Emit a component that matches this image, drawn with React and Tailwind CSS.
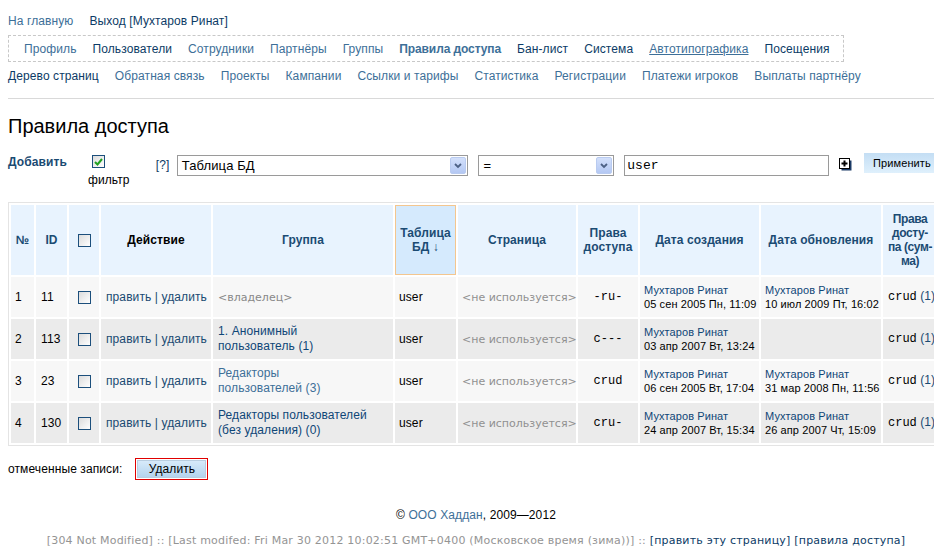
import React from 'react';

const sans = { fontFamily: '"Liberation Sans", Arial, sans-serif' };
const mono = { fontFamily: '"Liberation Mono", "Courier New", monospace' };
const verdana = { fontFamily: '"DejaVu Sans", Verdana, sans-serif' };

const Check = ({ checked }) => (
    <span className="inline-flex w-[13px] h-[13px] border border-[#1c4f7c] bg-gradient-to-br from-[#dcdcdc] to-[#ffffff] items-center justify-center align-middle">
        {checked && (
            <svg width="9" height="8" viewBox="0 0 9 8">
                <path d="M1 4 L3.5 6.5 L8 1" stroke="#21a121" strokeWidth="2" fill="none" />
            </svg>
        )}
    </span>
);

const Arrow = () => (
    <div className="w-[16px] h-[17px] rounded-[2px] bg-gradient-to-b from-[#d3e0fb] to-[#b4c8f3] border border-[#b9cbf0] flex items-center justify-center">
        <svg width="8" height="6" viewBox="0 0 8 6">
            <path d="M1 1 L4 4 L7 1" stroke="#4d6185" strokeWidth="1.8" fill="none" />
        </svg>
    </div>
);

const Author = ({ date }) => (
    <div className="text-[11px] leading-[14px] whitespace-nowrap">
        <div className="text-[#0f4677]">Мухтаров Ринат</div>
        <div className="text-black">{date}</div>
    </div>
);

const rows = [
    { n: 1, id: 11, group: null, rights: '-ru-', created: '05 сен 2005 Пн, 11:09', updated: '10 июл 2009 Пт, 16:02', bg: 'bg-[#f7f7f7]' },
    { n: 2, id: 113, group: ['1. Анонимный', 'пользователь (1)'], rights: 'c---', created: '03 апр 2007 Вт, 13:24', updated: null, bg: 'bg-[#ebebeb]' },
    { n: 3, id: 23, group: ['Редакторы', 'пользователей (3)'], visited: true, rights: 'crud', created: '06 сен 2005 Вт, 17:04', updated: '31 мар 2008 Пн, 11:56', bg: 'bg-[#f7f7f7]' },
    { n: 4, id: 130, group: ['Редакторы пользователей', '(без удаления) (0)'], rights: 'cru-', created: '24 апр 2007 Вт, 15:34', updated: '26 апр 2007 Чт, 15:09', bg: 'bg-[#ebebeb]' },
];

export default function App() {
    const visited = 'text-[#3d6f98]';
    const link = 'text-[#0c3b66]';
    return (
        <div className="w-[934px] h-[549px] overflow-hidden bg-white" style={sans}>
            <div className="w-[952px] px-2 text-[12px] text-black tracking-[0.1px]">
                {/* top links */}
                <div className="pt-[14px] flex gap-4 leading-[14px]">
                    <span className={visited}>На главную</span>
                    <span className={link}>Выход [Мухтаров Ринат]</span>
                </div>

                {/* main menu */}
                <div className="mt-[7px] w-[836px] h-[27px] border border-dashed border-[#c8c8c8] flex items-center pl-[15px] gap-4">
                    <span className={visited}>Профиль</span>
                    <span className={link}>Пользователи</span>
                    <span className={visited}>Сотрудники</span>
                    <span className={visited}>Партнёры</span>
                    <span className={visited}>Группы</span>
                    <span className={`${visited} font-bold tracking-[-0.1px]`}>Правила доступа</span>
                    <span className={link}>Бан-лист</span>
                    <span className={link}>Система</span>
                    <span className={`${visited} underline`}>Автотипографика</span>
                    <span className={link}>Посещения</span>
                </div>

                <div className="mt-[7px] flex gap-4 leading-[14px]">
                    <span className={link}>Дерево страниц</span>
                    <span className={visited}>Обратная связь</span>
                    <span className={visited}>Проекты</span>
                    <span className={visited}>Кампании</span>
                    <span className={visited}>Ссылки и тарифы</span>
                    <span className={visited}>Статистика</span>
                    <span className={visited}>Регистрации</span>
                    <span className={visited}>Платежи игроков</span>
                    <span className={visited}>Выплаты партнёру</span>
                </div>

                <div className="mt-[15px] border-t border-[#d9d9d9]" />

                <h1 className="mt-[15px] text-[20px] leading-[24px] font-normal text-black tracking-normal">Правила доступа</h1>

                {/* filter */}
                <div className="mt-[17px] flex items-start h-[38px]">
                    <span className="w-[84px] font-bold text-[#1a4a72] leading-[14px]">Добавить</span>
                    <div className="w-[64px] flex flex-col items-start">
                        <Check checked />
                        <span className="mt-[5px] -ml-[4px] leading-[14px]">фильтр</span>
                    </div>
                    <span className="w-[21px] mt-[3px] text-[#0c3b66] leading-[14px]">[?]</span>
                    <div className="w-[292px] h-[21px] border border-[#9a9a9a] flex items-center justify-between pl-[4px] pr-[1px] text-[13px]">
                        <span>Таблица БД</span>
                        <Arrow />
                    </div>
                    <div className="ml-[10px] w-[136px] h-[21px] border border-[#9a9a9a] flex items-center justify-between pl-[4px] pr-[1px] text-[13px]">
                        <span>=</span>
                        <Arrow />
                    </div>
                    <div className="ml-[10px] w-[205px] h-[21px] border border-[#9a9a9a] flex items-center pl-[2px] text-[13px] tracking-normal" style={mono}>
                        user
                    </div>
                    <svg className="ml-[10px] mt-[3px]" width="14" height="14" viewBox="0 0 14 14">
                        <rect x="2.5" y="2.5" width="10" height="10" fill="#1b3a66" />
                        <rect x="0.5" y="0.5" width="10" height="10" fill="#fff" stroke="#000" />
                        <path d="M5.5 2.5 V8.5 M2.5 5.5 H8.5" stroke="#000" strokeWidth="2" />
                    </svg>
                    <div className="ml-[11px] -mt-[2px] w-[80px] h-[20px] bg-gradient-to-b from-[#c4def4] to-[#dff0fc] flex items-center pl-[9px] text-[11px] text-black">
                        Применить
                    </div>
                </div>

                {/* table */}
                <table className="mt-[9px] table-fixed border border-[#e4e4e4] border-separate border-spacing-[2px] w-[932px] text-[12px]">
                    <colgroup>
                        <col className="w-[23px]" />
                        <col className="w-[31px]" />
                        <col className="w-[30px]" />
                        <col className="w-[110px]" />
                        <col className="w-[180px]" />
                        <col className="w-[61px]" />
                        <col className="w-[118px]" />
                        <col className="w-[60px]" />
                        <col className="w-[119px]" />
                        <col className="w-[120px]" />
                        <col className="w-[54px]" />
                    </colgroup>
                    <thead>
                        <tr className="h-[70px] text-[#1b4b73] font-bold text-[12px] leading-[14px]">
                            <th className="bg-[#e8f3fe]">№</th>
                            <th className="bg-[#e8f3fe]">ID</th>
                            <th className="bg-[#e8f3fe]"><Check /></th>
                            <th className="bg-[#e8f3fe] text-black">Действие</th>
                            <th className="bg-[#e8f3fe]">Группа</th>
                            <th className="bg-[#d5eafd] border border-[#f3c68f]">Таблица<br />БД ↓</th>
                            <th className="bg-[#e8f3fe]">Страница</th>
                            <th className="bg-[#e8f3fe]">Права<br />доступа</th>
                            <th className="bg-[#e8f3fe]">Дата создания</th>
                            <th className="bg-[#e8f3fe]">Дата обновления</th>
                            <th className="bg-[#e8f3fe] tracking-[-0.4px] whitespace-nowrap">Права<br />досту-<br />па (сум-<br />ма)</th>
                        </tr>
                    </thead>
                    <tbody>
                        {rows.map((r) => (
                            <tr key={r.n} className="h-[40px] leading-[15px]">
                                <td className={`${r.bg} pl-[4px]`}>{r.n}</td>
                                <td className={`${r.bg} pl-[5px]`}>{r.id}</td>
                                <td className={`${r.bg} pl-[9px]`}><Check /></td>
                                <td className={`${r.bg} pl-[5px] text-[#1a4a72] whitespace-nowrap`}>править | удалить</td>
                                <td className={`${r.bg} pl-[5px]`}>
                                    {r.group ? (
                                        <span className={r.visited ? visited : 'text-[#0f4677]'}>
                                            {r.group[0]}<br />{r.group[1]}
                                        </span>
                                    ) : (
                                        <span className="text-[#888] text-[11px] tracking-normal" style={verdana}>&lt;владелец&gt;</span>
                                    )}
                                </td>
                                <td className={`${r.bg} pl-[4px]`}>user</td>
                                <td className={`${r.bg} pl-[4px] text-[#909090] text-[11px] whitespace-nowrap tracking-normal`} style={verdana}>&lt;не используется&gt;</td>
                                <td className={`${r.bg} text-center text-[12px] tracking-normal`} style={mono}>{r.rights}</td>
                                <td className={`${r.bg} pl-[4px]`}><Author date={r.created} /></td>
                                <td className={`${r.bg} pl-[4px]`}>{r.updated && <Author date={r.updated} />}</td>
                                <td className={`${r.bg} pl-[5px] whitespace-nowrap`}>
                                    <span className="tracking-normal" style={mono}>crud</span>{' '}
                                    <span className="text-[#1a4a72]">(1)</span>
                                </td>
                            </tr>
                        ))}
                    </tbody>
                </table>

                {/* bulk actions */}
                <div className="mt-[12px] flex items-center">
                    <span>отмеченные записи:</span>
                    <div className="ml-[13px] border border-[#e00000] p-[1px]">
                        <div className="w-[69px] h-[18px] border border-[#b8cde0] bg-gradient-to-b from-[#d7eafa] to-[#b4d4ee] flex items-center justify-center text-[12px]">
                            Удалить
                        </div>
                    </div>
                </div>

                {/* footer */}
                <div className="mt-[28px] text-center leading-[14px]">
                    © <span className={visited}>ООО Хаддан</span>, 2009—2012
                </div>
                <div className="mt-[12px] text-center text-[11px] text-[#949494] leading-[14px] whitespace-nowrap tracking-[0.2px]" style={verdana}>
                    [304 Not Modified] :: [Last modifed: Fri Mar 30 2012 10:02:51 GMT+0400 (Московское время (зима))] ::{' '}
                    <span className="text-[#0c3b66]">[править эту страницу]</span>{' '}
                    <span className="text-[#0c3b66]">[правила доступа]</span>
                </div>
            </div>
        </div>
    );
}
